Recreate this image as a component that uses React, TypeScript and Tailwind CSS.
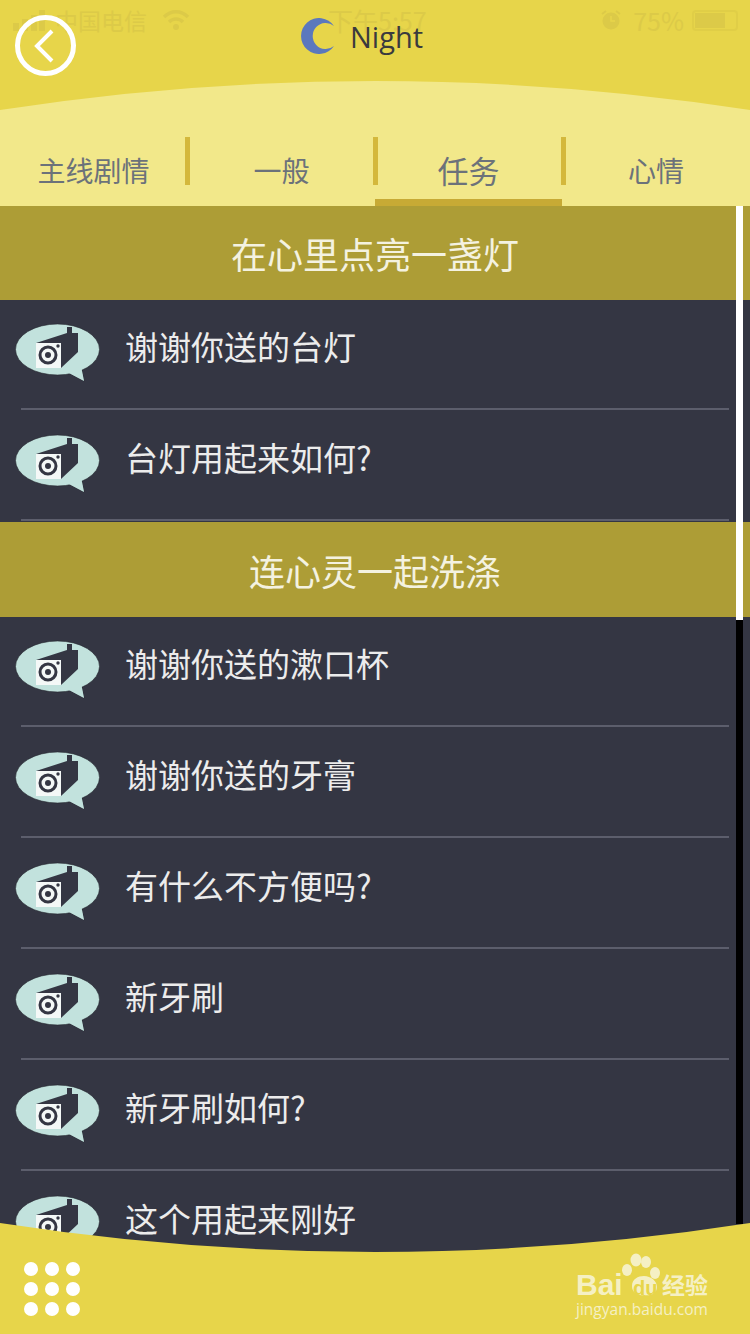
const cjk = "font-['Noto_Sans_CJK_SC','Noto_Sans',sans-serif]";

function ChatIcon() {
  return (
    <svg width="86" height="60" viewBox="0 0 86 60" className="shrink-0">
      <path d="M52 49 L69 58 L66 43 Z" fill="#c2e2dd" stroke="#23252e" strokeWidth="0.6" />
      <ellipse cx="42.5" cy="26.5" rx="42" ry="25.5" fill="#c2e2dd" stroke="#23252e" strokeWidth="0.6" />
      <path d="M52 49 L69 58 L66 43 Z" fill="#c2e2dd" />
      <path d="M21 20 L52 10 L52 4 L57 4 L57 10 L63 10 L63 29 L46 45 L21 45 Z" fill="#343643" />
      <rect x="21" y="20" width="25" height="25" fill="#f4f8f7" />
      <circle cx="33" cy="32" r="8" fill="none" stroke="#343643" strokeWidth="3" />
      <circle cx="33" cy="32" r="3" fill="#343643" />
      <circle cx="43" cy="23" r="1.7" fill="#343643" />
    </svg>
  );
}

function Row({ text }: { text: string }) {
  return (
    <div className="h-[111px]">
      <div className="flex h-[108px] items-start pl-[15px]">
        <div className="pt-[23px]"><ChatIcon /></div>
        <span className={`ml-[25px] mt-[22px] text-[33px] leading-[48px] text-[#ececec] ${cjk} -translate-x-px`}>{text}</span>
      </div>
      <div className="mx-[21px] h-[2px] bg-[#5c5e6c]" />
    </div>
  );
}

function Section({ title, h, rows }: { title: string; h: string; rows: string[] }) {
  return (
    <section>
      <div className={`flex items-center justify-center bg-[#ad9d36] text-[36px] text-[#f4f2e0] ${h} ${cjk}`}>{title}</div>
      {rows.map((r) => <Row key={r} text={r} />)}
    </section>
  );
}

function StatusBar() {
  return (
    <div className={`absolute left-0 right-0 top-0 flex h-[40px] items-center pl-[13px] pr-[12px] text-[#dcca48] ${cjk}`}>
      <div className="flex w-[250px] items-center">
        <svg width="32" height="21" viewBox="0 0 32 21" className="mr-[10px]">
          <rect x="0" y="13" width="6" height="8" fill="currentColor" />
          <rect x="9" y="9" width="6" height="12" fill="currentColor" />
          <rect x="18" y="5" width="6" height="16" fill="currentColor" />
          <rect x="26" y="0" width="6" height="21" fill="currentColor" />
        </svg>
        <span className="text-[23px] leading-none">中国电信</span>
        <svg width="28" height="22" viewBox="0 0 28 22" className="ml-[15px]" fill="none" stroke="currentColor" strokeWidth="3.5">
          <path d="M2 8 C9 1 19 1 26 8" />
          <path d="M7 13 C11 9 17 9 21 13" />
          <circle cx="14" cy="18" r="3" fill="currentColor" stroke="none" />
        </svg>
      </div>
      <span className="ml-[65px] text-[25px] leading-none">下午5:57</span>
      <div className="ml-auto flex items-center text-[25px]">
        <svg width="20" height="20" viewBox="0 0 20 20"><circle cx="10" cy="11" r="8.5" fill="currentColor" /><path d="M1 4 L5 1 M19 4 L15 1" stroke="currentColor" strokeWidth="2" /><path d="M10 6 V11 H14" stroke="#e7d54a" strokeWidth="1.5" fill="none" /></svg>
        <span className="ml-[12px] leading-none">75%</span>
        <div className="ml-[8px] flex h-[21px] w-[46px] items-center rounded-[4px] border-2 border-[#e0ce47] p-[1px]"><div className="h-full w-[30px] bg-[#dcca48]" /></div>
      </div>
    </div>
  );
}

function Tab({ label, active, big, shift }: { label: string; active?: boolean; big?: boolean; shift?: string }) {
  return (
    <div className="relative flex h-[69px] items-start justify-center">
      <span className={`${big ? "text-[31px]" : "text-[28px]"} ${shift ?? ""} mt-[9px] leading-[48px] text-[#6c727a] ${cjk}`}>{label}</span>
      {active && <div className="absolute bottom-0 -left-[3px] right-[-1px] h-[7px] bg-[#c7aa35]" />}
    </div>
  );
}

function Sep() {
  return <div className="h-[48px] w-[5px] self-start bg-[#d4b83c]" />;
}

export default function App() {
  return (
    <div className="relative h-[1334px] w-[750px] overflow-hidden bg-[#343643]">
      <header className="relative h-[206px] bg-[#f2e88a]">
        <svg className="absolute left-0 top-0" width="750" height="112" viewBox="0 0 750 112">
          <path d="M0 0 H750 V110 Q375 52 0 110 Z" fill="#e7d54a" />
        </svg>
        <StatusBar />
        <div className="relative flex h-[137px] items-start pl-[15px] pt-[15px]">
          <div className="flex h-[61px] w-[61px] items-center justify-center rounded-full border-[5px] border-white">
            <svg width="24" height="34" viewBox="0 0 24 34" fill="none" stroke="white" strokeWidth="4" className="-ml-[3px]">
              <path d="M20 2 L5 17 L20 32" />
            </svg>
          </div>
          <div className="ml-[225px] mt-[3px] flex items-center gap-[14px]">
            <svg width="35" height="36" viewBox="0 0 35 36"><path d="M33 8 A18 18 0 1 0 33 28 A13 13 0 1 1 33 8 Z" fill="#5b78bd" /></svg>
            <span className="font-['Open_Sans',sans-serif] text-[29px] leading-none text-[#3a3a3e]">Night</span>
          </div>
        </div>
        <div className="relative grid grid-cols-[185px_5px_183px_5px_183px_5px_184px]">
          <Tab label="主线剧情" shift="translate-x-px" />
          <Sep />
          <Tab label="一般" />
          <Sep />
          <Tab label="任务" active big shift="-translate-x-px" />
          <Sep />
          <Tab label="心情" shift="-translate-x-[2px]" />
        </div>
      </header>

      <Section title="在心里点亮一盏灯" h="h-[94px]" rows={["谢谢你送的台灯", "台灯用起来如何?"]} />
      <Section title="连心灵一起洗涤" h="h-[95px]" rows={["谢谢你送的漱口杯", "谢谢你送的牙膏", "有什么不方便吗?", "新牙刷", "新牙刷如何?", "这个用起来刚好"]} />

      <div className="absolute left-[736px] top-[206px] h-[414px] w-[7px] bg-white" />
      <div className="absolute left-[736px] top-[620px] h-[604px] w-[7px] bg-black" />

      <footer className="absolute bottom-0 left-0 right-0 h-[112px]">
        <svg className="absolute left-0 top-0" width="750" height="112" viewBox="0 0 750 112">
          <path d="M0 1 Q375 59 750 1 V112 H0 Z" fill="#e7d54a" />
        </svg>
        <div className="absolute left-[24px] top-[40px] grid grid-cols-3 gap-x-[7px] gap-y-[6px]">
          {Array.from({ length: 9 }).map((_, i) => (
            <div key={i} className="h-[14px] w-[14px] rounded-full bg-white" />
          ))}
        </div>
        <div className="absolute left-[576px] top-[19px] h-[80px] w-[136px] text-[#f5f0c4]">
          <svg className="absolute left-[46px] top-[12px]" width="40" height="44" viewBox="0 0 40 44" fill="currentColor">
            <ellipse cx="5" cy="17" rx="5" ry="6" />
            <ellipse cx="14" cy="7" rx="5.5" ry="6.5" />
            <ellipse cx="24" cy="9" rx="5" ry="6" />
            <ellipse cx="33" cy="20" rx="5" ry="6" />
            <path d="M10 33 C10 26 16 23 22 23 C29 23 35 28 35 34 C35 41 28 43 22 42 C16 43 10 40 10 33 Z" />
          </svg>
          <span className="absolute left-0 top-[29px] font-['Liberation_Sans',sans-serif] text-[30px] font-bold leading-none">Bai</span>
          <span className="absolute left-[57px] top-[37px] font-['Liberation_Sans',sans-serif] text-[20px] font-bold leading-none text-[#e7d54a]">du</span>
          <span className={`absolute left-[86px] top-[28px] text-[23px] font-bold leading-[30px] ${cjk}`}>经验</span>
          <span className="absolute left-0 top-[58px] font-['Open_Sans',sans-serif] text-[15.5px] leading-[20px] whitespace-nowrap">jingyan.baidu.com</span>
        </div>
      </footer>
    </div>
  );
}
